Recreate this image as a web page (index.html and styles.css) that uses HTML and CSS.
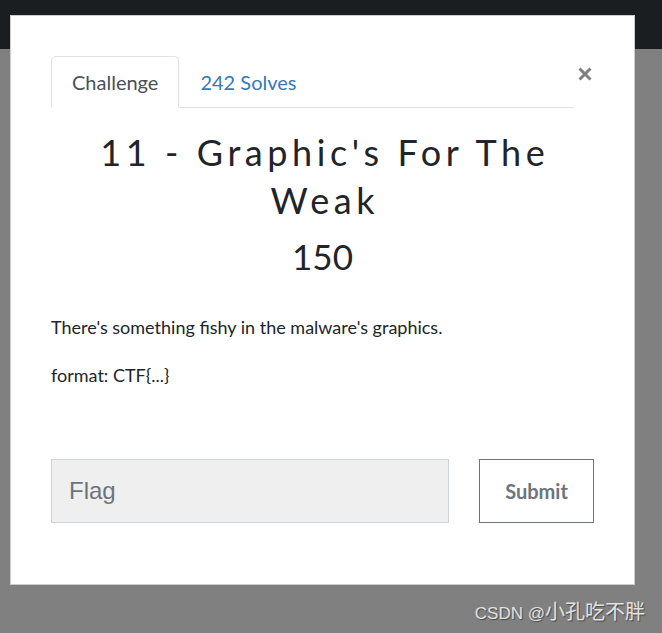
FILE: index.html
```html
<!DOCTYPE html>
<html lang="en">
<head>
<meta charset="utf-8">
<title>Challenge</title>
<link rel="stylesheet" href="styles.css">
</head>
<body>
<div class="topbar"></div>
<div class="modal">
  <div class="modal-header">
    <ul class="tabs">
      <li class="tab active">Challenge</li>
      <li class="tab link">242 Solves</li>
    </ul>
    <button class="close" aria-label="Close">
      <svg width="14" height="14" viewBox="0 0 14 14"><path d="M1.5 1.5 L12.5 12.5 M12.5 1.5 L1.5 12.5" stroke="#808080" stroke-width="3" fill="none"/></svg>
    </button>
  </div>
  <h2 class="challenge-name">11 - Graphic's For The Weak</h2>
  <h3 class="challenge-value">150</h3>
  <div class="challenge-desc">
    <p>There's something fishy in the malware's graphics.</p>
    <p>format: CTF{...}</p>
  </div>
  <form class="submit-row">
    <input class="flag-input" type="text" placeholder="Flag">
    <button class="submit-btn" type="button">Submit</button>
  </form>
</div>
<div class="watermark"><span class="wm-latin">CSDN @</span>小孔吃不胖</div>
</body>
</html>
```
FILE: styles.css
```css
html, body {
  margin: 0;
  padding: 0;
}
body {
  background: #808080;
  font-family: Lato, "Noto Sans", sans-serif;
  color: #212529;
  height: 633px;
  overflow: hidden;
  position: relative;
}
.topbar {
  height: 49px;
  background: #1b1e21;
}
.modal {
  position: absolute;
  left: 10px;
  top: 15px;
  width: 625px;
  height: 570px;
  box-sizing: border-box;
  border: 1px solid rgba(0, 0, 0, 0.2);
  background: #fff;
  padding: 40px;
}
.modal-header {
  display: flex;
  align-items: flex-start;
}
.tabs {
  flex: 1;
  display: flex;
  list-style: none;
  margin: 0;
  padding: 0;
  border-bottom: 1px solid #dee2e6;
}
.tab {
  padding: 10px 20px;
  font-size: 20px;
  line-height: 30px;
  border: 1px solid transparent;
  border-top-left-radius: 5px;
  border-top-right-radius: 5px;
  margin-bottom: -1px;
}
.tab.active {
  color: #495057;
  border-color: #dee2e6 #dee2e6 #fff;
  background: #fff;
}
.tab.link {
  color: #337ab7;
}
.close {
  width: 18px;
  padding: 0;
  margin: 11px 0 0 2px;
  border: 0;
  background: none;
  line-height: 0;
}
.challenge-name {
  margin: 20px 0 11px;
  font-size: 36px;
  line-height: 48px;
  font-weight: 400;
  letter-spacing: 4.6px;
  padding-left: 4.6px;
  text-align: center;
  color: #212529;
}
.challenge-value {
  margin: 0 0 10px;
  font-size: 35px;
  line-height: 42px;
  font-weight: 400;
  text-align: center;
  color: #212529;
}
.challenge-desc {
  font-size: 18px;
  line-height: 27px;
  padding-top: 27px;
}
.challenge-desc p {
  margin: 0 0 21px;
}
.submit-row {
  display: flex;
  gap: 30px;
  margin-top: 70px;
}
.flag-input {
  flex: 1;
  height: 64px;
  box-sizing: border-box;
  border: 1px solid #ced4da;
  background: #efefef;
  padding: 0 17px;
  font-family: "Liberation Sans", Arial, sans-serif;
  font-size: 24px;
  color: #495057;
  outline: none;
}
.flag-input::placeholder {
  color: #6c757d;
}
.submit-btn {
  width: 115px;
  height: 64px;
  box-sizing: border-box;
  border: 1px solid #6c757d;
  background: #fff;
  color: #6c757d;
  font-family: Lato, sans-serif;
  font-weight: 700;
  font-size: 20px;
}
.watermark {
  position: absolute;
  right: 17px;
  top: 599px;
  font-family: "Noto Sans CJK SC", sans-serif;
  font-size: 20px;
  line-height: 24px;
  color: #e2e2e2;
  text-shadow: 1px 1px 1px rgba(0, 0, 0, 0.45);
}
.wm-latin {
  font-family: "Liberation Sans", "Noto Sans CJK SC", sans-serif;
  font-size: 17px;
}
```
